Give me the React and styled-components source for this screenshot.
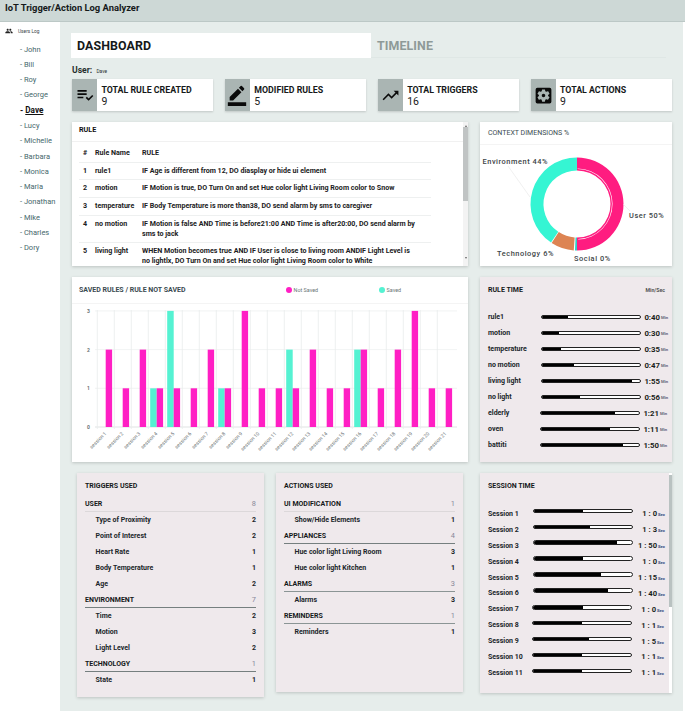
import React from 'react';
import styled, { createGlobalStyle } from 'styled-components';
import { MdPlaylistAddCheck, MdBorderColor, MdTrendingUp, MdSettingsApplications, MdPeople } from 'react-icons/md';

const Global = createGlobalStyle`
  html, body { margin: 0; padding: 0; background: #fff; }
  body { font-family: Roboto, "Liberation Sans", sans-serif; color: #111; }
  * { box-sizing: border-box; }
`;

const Page = styled.div`width: 685px; height: 711px; overflow: hidden; display: flex; flex-direction: column;`;
const Header = styled.header`
  height: 22px; flex: none; background: #cdd8d6; border-bottom: 1px solid #bcc8c6;
  padding: 1px 5px 0; font-size: 9.4px; font-weight: 700; line-height: 13px; color: #15191a;
`;
const Body = styled.div`flex: 1; display: flex; min-height: 0;`;
const Sidebar = styled.aside`width: 60px; flex: none; background: #fff; padding-top: 5px;`;
const SideHead = styled.div`
  display: flex; align-items: center; gap: 5px; padding-left: 5px; height: 8px;
  font-size: 4.8px; color: #384448; svg { width: 8px; height: 8px; color: #222; }
`;
const UserList = styled.ul`list-style: none; margin: 6.5px 0 0; padding: 0 0 0 20px;`;
const UserItem = styled.li`
  height: 15.3px; line-height: 15.3px; font-size: ${p => p.$active ? '8.2px' : '7.5px'};
  font-weight: ${p => p.$active ? 700 : 400}; color: ${p => p.$active ? '#111' : '#46686c'};
  span { text-decoration: ${p => p.$active ? 'underline' : 'none'}; }
`;
const Main = styled.main`
  width: 623px; flex: none; background: #e6edeb; padding: 11px 11px 0 12px;
  display: flex; flex-direction: column;
`;
const Tabs = styled.div`display: flex; height: 25px; margin-left: -1px; flex: none;`;
const Tab = styled.div`
  width: ${p => p.$active ? '300px' : '295px'}; padding-left: 6px; line-height: 25px;
  font-size: 12.4px; font-weight: 700; letter-spacing: .1px;
  background: ${p => p.$active ? '#fff' : 'transparent'}; color: ${p => p.$active ? '#15191a' : '#8e9a98'};
  border-bottom: ${p => p.$active ? 'none' : '1px solid #dfe7e5'};
`;
const UserLine = styled.div`
  height: 21px; flex: none; padding-top: 6px; font-size: 8.6px; font-weight: 700; color: #27302f; line-height: 13px;
  small { font-size: 4.8px; font-weight: 400; margin-left: 2px; }
`;
const StatGrid = styled.div`display: grid; grid-template-columns: repeat(4, 1fr); column-gap: 11.4px; height: 32px; flex: none;`;
const Stat = styled.div`display: flex; background: #fff; box-shadow: 0 1px 2px rgba(0,0,0,.16);`;
const StatIcon = styled.div`
  width: 25px; flex: none; background: #aab5b3; display: flex; align-items: center; justify-content: center;
  svg { width: ${p => p.$size || 18}px; height: ${p => p.$size || 18}px; color: #0a0a0a; }
`;
const StatText = styled.div`padding: 6px 0 0 4.5px;`;
const StatTitle = styled.div`font-size: 8.8px; font-weight: 700; line-height: 11px; color: #16191a;`;
const StatValue = styled.div`font-size: 10.5px; line-height: 11px; color: #222;`;
const Row = styled.div`
  display: grid; grid-template-columns: 396px 192px; column-gap: 12px; margin-top: 11px;
  height: ${p => p.$h}px; flex: none;
`;
const Card = styled.section`
  background: ${p => p.$tint ? '#efe9ec' : '#fff'}; box-shadow: 0 1px 3px rgba(0,0,0,.18); min-width: 0; overflow: hidden;
`;
const RuleCard = styled(Card)`display: flex;`;
const RuleContent = styled.div`flex: 1; min-width: 0; height: 144px; overflow: hidden;`;
const RuleHead = styled.div`
  height: 20px; padding: 3px 0 0 7px; line-height: 9px; font-size: 7.2px; font-weight: 700;
  border-bottom: 1px solid #f1f1f1;
`;
const Table = styled.table`
  border-collapse: collapse; table-layout: fixed; width: 352px; margin-left: 7px; font-size: 7.1px; font-weight: 700;
  line-height: 9.7px; color: #1b2122;
  th, td { text-align: left; vertical-align: top; padding: 3px 0 4px; border-bottom: 1px solid #eef0f0; }
  th { padding: 6px 0 4px; height: 20px; }
  th:first-child, td:first-child { padding-left: 4px; }
  td:last-child { padding-right: 12px; }
`;
const Track = styled.div`
  width: 5px; flex: none; background: #f3f3f3; display: flex; flex-direction: column; align-items: center; padding-top: 9px;
`;
const Thumb = styled.div`width: 5px; height: 74px; background: #c0c4c4;`;
const Arrow = styled.i`
  width: 0; height: 0; border-left: 1.5px solid transparent; border-right: 1.5px solid transparent; margin-top: ${p => p.$mt || 0}px;
  ${p => p.$up ? 'border-bottom: 2px solid #666;' : 'border-top: 2px solid #666;'}
`;
const ChartHead = styled.div`
  height: ${p => p.$h}px; padding-left: ${p => p.$pl}px; display: flex; align-items: center; border-bottom: 1px solid #f4f4f4;
  font-size: ${p => p.$fs}px; font-weight: ${p => p.$w}; color: #3a4a50;
`;
const LegendDot = styled.i`width: 6px; height: 6px; border-radius: 50%; background: ${p => p.$c}; margin-left: ${p => p.$ml}px; margin-right: 2px; flex: none;`;
const LegendText = styled.span`font-size: 5.4px; font-weight: 400; color: #6a7476; width: ${p => p.$w}px;`;
const ChartSvg = styled.svg`display: block;`;
const PanelTitle = styled.div`font-size: 7px; font-weight: 700; line-height: 10px; color: #15191a;`;
const TimeCard = styled(Card)`padding: 8px 0 0 8px;`;
const TimeHead = styled.div`display: flex; justify-content: space-between; align-items: center; height: 10px; padding-right: 7px; margin-bottom: 14px;`;
const MinSec = styled.span`font-size: 5.2px; font-weight: 700; color: #555;`;
const TimeRow = styled.div`display: flex; align-items: center; height: 16px;`;
const RowLabel = styled.div`width: ${p => p.$w}px; flex: none; font-size: 7px; font-weight: 700; color: #20262a; white-space: nowrap;`;
const Progress = styled.div`
  width: 100px; height: 4.6px; flex: none; border: 1px solid #222; border-radius: 3px; background: #fff; overflow: hidden;
  margin-left: ${p => p.$shift ? -1 : 0}px; margin-bottom: ${p => p.$lift || 0}px;
`;
const ProgressFill = styled.div`height: 100%; background: #000;`;
const TimeValue = styled.div`width: 19px; flex: none; text-align: right; font-size: 7.8px; font-weight: 700; color: #1a1f20; white-space: nowrap;`;
const Unit = styled.span`width: 10px; padding-left: 1px; flex: none; font-size: 4.2px; font-weight: 700; color: #667;`;
const BottomRow = styled.div`display: flex; margin-top: 11px; padding-left: 5px; align-items: flex-start; flex: none;`;
const ListCard = styled(Card)`
  width: 187px; height: ${p => p.$h}px; margin-right: ${p => p.$mr}px; padding: 8px 8px 0;
`;
const ListTitle = styled(PanelTitle)`margin-bottom: 5px;`;
const GroupRow = styled.div`
  display: flex; justify-content: space-between; align-items: center; height: 16px; font-size: 7px; font-weight: 700;
  color: #15191a; border-bottom: ${p => p.$line === 'thick' ? '1.5px solid #757f7f' : p.$line === 'mid' ? '1px solid #8b9595' : '1px solid #dcd8da'};
  b { font-weight: 400; color: #889; font-size: 7.4px; }
`;
const ItemRow = styled.div`
  display: flex; justify-content: space-between; align-items: center; height: 16px; padding-left: 10.5px;
  font-size: 7px; font-weight: 700; color: #20262a;
`;
const SessionCard = styled(Card)`display: flex; height: 220px; width: 192px;`;
const SessionBody = styled.div`flex: 1; padding: 8px 0 0 8px; min-width: 0;`;
const SessionRows = styled.div`margin-top: 15px;`;
const SessionRow = styled(TimeRow)`height: 15.9px;`;
const SessionValue = styled(TimeValue)`width: 24px; font-size: 7.6px;`;
const SessionUnit = styled(Unit)`color: #334a80; padding-top: 2px; width: 9px;`;
const ScrollRail = styled.div`width: 3px; flex: none; background: #fff; padding-top: 2px;`;
const ScrollThumb = styled.div`width: 3px; height: 132px; background: #b9c2c1;`;

const users = ['John','Bill','Roy','George','Dave','Lucy','Michelle','Barbara','Monica','Maria','Jonathan','Mike','Charles','Dory'];
const rules = [
  ['1','rule1','IF Age is different from 12, DO diasplay or hide ui element'],
  ['2','motion','IF Motion is true, DO Turn On and set Hue color light Living Room color to Snow'],
  ['3','temperature','IF Body Temperature is more than38, DO send alarm by sms to caregiver'],
  ['4','no motion','IF Motion is false AND Time is before21:00 AND Time is after20:00, DO send alarm by sms to jack'],
  ['5','living light','WHEN Motion becomes true AND IF User is close to living room ANDIF Light Level is no lightlx, DO Turn On and set Hue color light Living Room color to White'],
];
const notSaved = [2,1,2,1,1,1,2,1,3,1,1,1,2,1,1,2,1,2,3,1,1];
const saved = [0,0,0,1,3,0,0,1,0,0,0,2,0,0,0,2,0,0,0,0,0];
const ruleTimes = [['rule1',27,'0:40'],['motion',17,'0:30'],['temperature',19,'0:35'],['no motion',33,'0:47'],['living light',92,'1:55'],['no light',39,'0:56'],['elderly',76,'1:21',1],['oven',70,'1:11',1],['battiti',84,'1:50',1]];
const sessions = [[50,'1 : 0'],[57,'1 : 3'],[85,'1 : 50'],[50,'1 : 0'],[68,'1 : 15'],[76,'1 : 40'],[51,'1 : 0',1],[50,'1 : 1',1],[57,'1 : 5',1],[50,'1 : 1',1],[50,'1 : 1',1]];
const triggers = [
  ['USER',8,'light',[['Type of Proximity',2],['Point of Interest',2],['Heart Rate',1],['Body Temperature',1],['Age',2]]],
  ['ENVIRONMENT',7,'thick',[['Time',2],['Motion',3],['Light Level',2]]],
  ['TECHNOLOGY',1,'thick',[['State',1]]],
];
const actions = [
  ['UI MODIFICATION',1,'light',[['Show/Hide Elements',1]]],
  ['APPLIANCES',4,'thick',[['Hue color light Living Room',3],['Hue color light Kitchen',1]]],
  ['ALARMS',3,'mid',[['Alarms',3]]],
  ['REMINDERS',1,'mid',[['Reminders',1]]],
];

const PINK = '#ff1fc4';
const TEAL = '#55f2d2';

function arc(cx, cy, r0, r1, a0, a1) {
  const p = (r, a) => [cx + r * Math.sin(a * Math.PI / 180), cy - r * Math.cos(a * Math.PI / 180)].map(n => n.toFixed(2)).join(' ');
  const large = a1 - a0 > 180 ? 1 : 0;
  return `M${p(r1, a0)}A${r1} ${r1} 0 ${large} 1 ${p(r1, a1)}L${p(r0, a1)}A${r0} ${r0} 0 ${large} 0 ${p(r0, a0)}Z`;
}

function Donut() {
  const label = { fontSize: 7.4, fontWeight: 500, letterSpacing: 0.55, fill: '#3c4446', fontFamily: 'Roboto, sans-serif' };
  return (
    <ChartSvg width="192" height="120" viewBox="480 146 192 120">
      <path d={arc(577, 205, 33.5, 46.5, 0, 180)} fill="#ff1c80" />
      <path d={arc(577, 205, 35, 35.6, 1, 178)} fill="#fff" />
      <path d={arc(577, 205, 33.5, 46.5, 180, 182.5)} fill="#2fd0c8" />
      <path d={arc(577, 205, 33.5, 46.5, 184, 213)} fill="#dd8453" />
      <path d={arc(577, 205, 33.5, 46.5, 214, 360)} fill="#35f5d3" />
      <path d="M508 167 L530 198" stroke="#e6e6e6" strokeWidth=".6" fill="none" />
      <path d="M623 205 L630 212" stroke="#e6e6e6" strokeWidth=".6" fill="none" />
      <text x="482.5" y="165" style={label}>Environment 44%</text>
      <text x="629" y="219" style={label}>User 50%</text>
      <text x="497" y="257" style={label}>Technology 6%</text>
      <text x="574" y="262" style={label}>Social 0%</text>
    </ChartSvg>
  );
}

function BarChart() {
  const x0 = 97.3, w = 17, bottom = 427, unit = 38.7;
  const tick = { fontSize: 5, fill: '#6b7274', fontFamily: 'Roboto, sans-serif' };
  return (
    <ChartSvg width="396" height="157" viewBox="72 304 396 157">
      {[0,1,2,3].map(v => (
        <g key={v}>
          <line x1="95" x2="457" y1={bottom - v * unit} y2={bottom - v * unit} stroke={v === 0 ? '#d8dcdc' : '#eef0f0'} strokeWidth=".8" />
          <text x="87" y={bottom - v * unit + 2} style={{ ...tick, fontWeight: 700 }}>{v}</text>
        </g>
      ))}
      {notSaved.map((n, i) => {
        const x = x0 + i * w;
        return (
          <g key={i}>
            <line x1={x} x2={x} y1="310" y2={bottom + 2} stroke="#e8ecec" strokeWidth=".8" />
            {saved[i] > 0 && <rect x={x + 1.9} y={bottom - saved[i] * unit} width="6.5" height={saved[i] * unit} fill={TEAL} />}
            <rect x={x + 8.4} y={bottom - n * unit} width="6.4" height={n * unit} fill={PINK} />
            <text x={x + 9.5} y="434" textAnchor="end" transform={`rotate(-45 ${x + 9.5} 434)`} style={tick}>{`session ${i + 1}`}</text>
          </g>
        );
      })}
    </ChartSvg>
  );
}

function GroupList({ data }) {
  return data.map(([name, total, line, items]) => (
    <React.Fragment key={name}>
      <GroupRow $line={line}><span>{name}</span><b>{total}</b></GroupRow>
      {items.map(([n, c]) => <ItemRow key={n}><span>{n}</span><span>{c}</span></ItemRow>)}
    </React.Fragment>
  ));
}

export default function App() {
  return (
    <Page>
      <Global />
      <Header>IoT Trigger/Action Log Analyzer</Header>
      <Body>
        <Sidebar>
          <SideHead><MdPeople /><span>Users Log</span></SideHead>
          <UserList>
            {users.map(u => <UserItem key={u} $active={u === 'Dave'}>- <span>{u}</span></UserItem>)}
          </UserList>
        </Sidebar>
        <Main>
          <Tabs>
            <Tab $active>DASHBOARD</Tab>
            <Tab>TIMELINE</Tab>
          </Tabs>
          <UserLine>User: <small>Dave</small></UserLine>
          <StatGrid>
            <Stat><StatIcon $size={20}><MdPlaylistAddCheck /></StatIcon><StatText><StatTitle>TOTAL RULE CREATED</StatTitle><StatValue>9</StatValue></StatText></Stat>
            <Stat><StatIcon $size={22}><MdBorderColor /></StatIcon><StatText><StatTitle>MODIFIED RULES</StatTitle><StatValue>5</StatValue></StatText></Stat>
            <Stat><StatIcon $size={19}><MdTrendingUp /></StatIcon><StatText><StatTitle>TOTAL TRIGGERS</StatTitle><StatValue>16</StatValue></StatText></Stat>
            <Stat><StatIcon $size={21}><MdSettingsApplications /></StatIcon><StatText><StatTitle>TOTAL ACTIONS</StatTitle><StatValue>9</StatValue></StatText></Stat>
          </StatGrid>
          <Row $h={144}>
            <RuleCard>
              <RuleContent>
                <RuleHead>RULE</RuleHead>
                <Table>
                  <colgroup><col width="16" /><col width="47" /><col width="289" /></colgroup>
                  <thead><tr><th>#</th><th>Rule Name</th><th>RULE</th></tr></thead>
                  <tbody>
                    {rules.map(r => <tr key={r[0]}><td>{r[0]}</td><td>{r[1]}</td><td>{r[2]}</td></tr>)}
                  </tbody>
                </Table>
              </RuleContent>
              <Track>
                <Arrow $up $mt={-6} />
                <Thumb />
                <Arrow $mt={56} />
              </Track>
            </RuleCard>
            <Card>
              <ChartHead $h={23} $pl={8} $fs={7} $w={400}>CONTEXT DIMENSIONS %</ChartHead>
              <Donut />
            </Card>
          </Row>
          <Row $h={185}>
            <Card>
              <ChartHead $h={27} $pl={7} $fs={7} $w={700}>
                <span>SAVED RULES / RULE NOT SAVED</span>
                <LegendDot $c={PINK} $ml={100} /><LegendText $w={85}>Not Saved</LegendText>
                <LegendDot $c={TEAL} $ml={0} /><LegendText $w={30}>Saved</LegendText>
              </ChartHead>
              <BarChart />
            </Card>
            <TimeCard $tint>
              <TimeHead><PanelTitle>RULE TIME</PanelTitle><MinSec>Min/Sec</MinSec></TimeHead>
              {ruleTimes.map(([n, pct, v, shift]) => (
                <TimeRow key={n}>
                  <RowLabel $w={53}>{n}</RowLabel>
                  <Progress $shift={shift}><ProgressFill style={{ width: `${pct}%` }} /></Progress>
                  <TimeValue>{v}</TimeValue>
                  <Unit>Min</Unit>
                </TimeRow>
              ))}
            </TimeCard>
          </Row>
          <BottomRow>
            <ListCard $tint $h={224} $mr={12}>
              <ListTitle>TRIGGERS USED</ListTitle>
              <GroupList data={triggers} />
            </ListCard>
            <ListCard $tint $h={219} $mr={17}>
              <ListTitle>ACTIONS USED</ListTitle>
              <GroupList data={actions} />
            </ListCard>
            <SessionCard $tint>
              <SessionBody>
                <PanelTitle>SESSION TIME</PanelTitle>
                <SessionRows>
                  {sessions.map(([pct, v, shift], i) => (
                    <SessionRow key={i}>
                      <RowLabel $w={45}>{`Session ${i + 1}`}</RowLabel>
                      <Progress $shift={shift} $lift={shift ? 4 : 6}><ProgressFill style={{ width: `${pct}%` }} /></Progress>
                      <SessionValue>{v}</SessionValue>
                      <SessionUnit>Sec</SessionUnit>
                    </SessionRow>
                  ))}
                </SessionRows>
              </SessionBody>
              <ScrollRail><ScrollThumb /></ScrollRail>
            </SessionCard>
          </BottomRow>
        </Main>
      </Body>
    </Page>
  );
}
